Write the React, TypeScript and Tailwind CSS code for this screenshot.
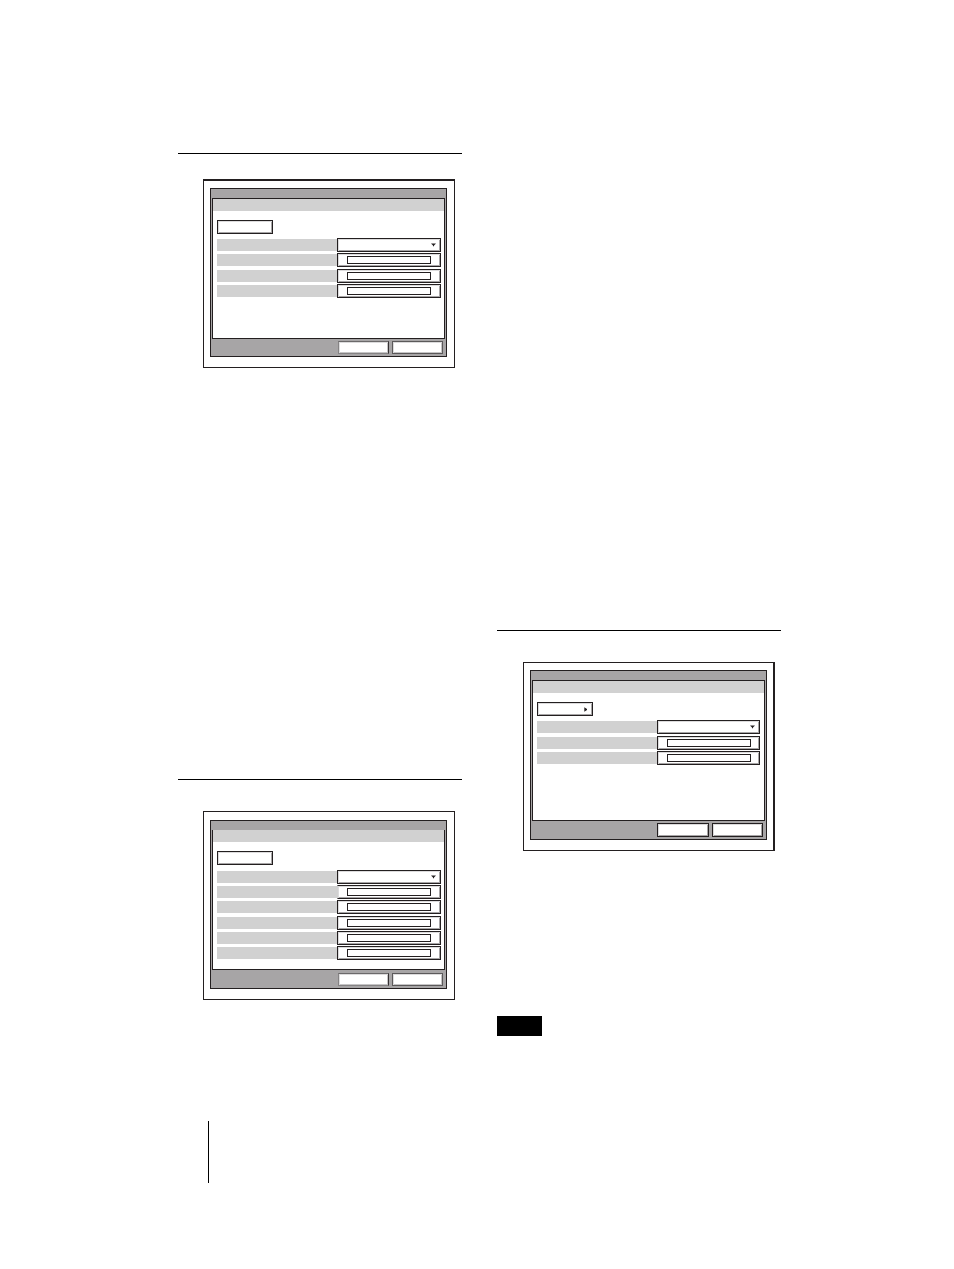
import React from "react";

const bevel =
  "border border-[#231f20] bg-white shadow-[inset_1px_1px_0_#dcdbdc,inset_-1px_-1px_0_#a7a5a6]";

type FieldRowProps = {
  id: string;
  kind: "select" | "text";
  openLeft?: boolean;
};

function FieldRow({ id, kind, openLeft }: FieldRowProps) {
  return (
    <div className="flex h-[14px] items-center">
      <label htmlFor={id} className="h-3 w-[120px] shrink-0 bg-[#d1d1d1]" />
      {kind === "select" ? (
        <div className="relative h-full min-w-0 flex-1">
          <select
            id={id}
            aria-label={id}
            className={`block h-full w-full appearance-none ${bevel}`}
          />
          <svg
            className="pointer-events-none absolute top-[5px] right-[5px]"
            width="5"
            height="4"
            viewBox="0 0 5 4"
            aria-hidden="true"
          >
            <path d="M0 0.5H5L3 2.6V3.2H2V2.6Z" fill="#231f20" />
          </svg>
        </div>
      ) : (
        <div
          className={`flex h-full min-w-0 flex-1 items-center pr-2 pl-[9px] ${bevel} ${
            openLeft ? "border-l-[#d1d1d1]" : ""
          }`}
        >
          <input
            id={id}
            type="text"
            aria-label={id}
            className="h-2 w-full max-w-[84px] border border-[#231f20] bg-white"
          />
        </div>
      )}
    </div>
  );
}

type DialogProps = {
  name: string;
  frame: string;
  panel: string;
  rows: string;
  count: number;
  footer: string;
  firstButton: string;
  secondButton: string;
  arrow?: boolean;
  openRow?: number;
};

function Dialog(p: DialogProps) {
  return (
    <section className={`border-[#231f20] pl-[6px] ${p.frame}`} aria-label={p.name}>
      <div className="border border-[#231f20] bg-[#a7a5a6] px-px">
        <div className="h-[9px]" />
        <div className={`border-[#231f20] bg-white ${p.panel}`}>
          <div className="h-3 bg-[#d1d1d1]" />
          <button
            type="button"
            aria-label={`${p.name} menu`}
            className={`mt-[9px] ml-1 flex h-[14px] w-14 items-center justify-end pr-1 ${bevel}`}
          >
            {p.arrow && (
              <svg width="4" height="5" viewBox="0 0 4 5" aria-hidden="true">
                <path d="M0.3 0.3L3 2V3L0.3 4.7Z" fill="#231f20" />
              </svg>
            )}
          </button>
          <div className={`flex flex-col justify-between pl-1 ${p.rows}`}>
            {Array.from({ length: p.count }, (_, i) => (
              <FieldRow
                key={i}
                id={`${p.name}-${i + 1}`}
                kind={i === 0 ? "select" : "text"}
                openLeft={i === p.openRow}
              />
            ))}
          </div>
        </div>
        <div className={`flex justify-end gap-[3px] pt-[2px] pr-[2px] pb-[2px] ${p.footer}`}>
          <button type="button" aria-label={`${p.name} first`} className={p.firstButton} />
          <button type="button" aria-label={`${p.name} second`} className={p.secondButton} />
        </div>
      </div>
    </section>
  );
}

const softFirst =
  "h-[13px] w-[51px] border border-[#858384] border-t-[#6b696a] border-r-[#353132] bg-white shadow-[inset_1px_1px_0_#dcdbdc,inset_-1px_-1px_0_#c5c4c5]";
const softSecond =
  "h-[13px] w-[51px] border border-[#5b595a] bg-white shadow-[inset_1px_1px_0_#dcdbdc,inset_-1px_-1px_0_#c5c4c5]";

export default function App() {
  return (
    <main className="min-h-screen bg-white pb-[86px] font-['Liberation_Sans',sans-serif]">
      <div className="grid grid-cols-2 gap-x-[35px] pr-[173px] pl-[178px]">
        <div className="pt-[153px]">
          <hr className="border-t border-black" />
          <Dialog
            name="one"
            frame="mt-[25px] mr-[7px] ml-[25px] border border-t-2 pt-[7px] pr-[7px] pb-[10px]"
            panel="h-[141px] border"
            rows="mt-1 h-[60px] pr-[3px]"
            count={4}
            footer="h-[17px]"
            firstButton={softFirst}
            secondButton={softSecond}
          />
          <hr className="mt-[411px] border-t border-black" />
          <Dialog
            name="two"
            frame="mt-[31px] mr-[7px] ml-[25px] border pt-2 pr-[7px] pb-[10px]"
            panel="h-[140px] border-x border-b"
            rows="mt-[5px] h-[90px] pr-[3px]"
            count={6}
            footer="h-[18px] pt-[3px]"
            firstButton={softFirst}
            secondButton={softSecond}
            openRow={1}
          />
          <div className="mt-[121px] ml-[30px] h-[62px] border-l border-black" />
        </div>
        <div className="pt-[630px]">
          <hr className="border-t border-black" />
          <Dialog
            name="three"
            frame="mt-[31px] mr-[6px] ml-[26px] border border-r-2 pt-[7px] pr-[6px] pb-[10px]"
            panel="h-[141px] border"
            rows="mt-1 h-[45px] pr-1"
            count={3}
            footer="h-[18px]"
            firstButton={`h-[14px] w-[52px] ${bevel}`}
            secondButton={`h-[14px] w-[51px] ${bevel}`}
            arrow
          />
          <div className="mt-[165px] h-5 w-[45px] bg-black" />
        </div>
      </div>
    </main>
  );
}
